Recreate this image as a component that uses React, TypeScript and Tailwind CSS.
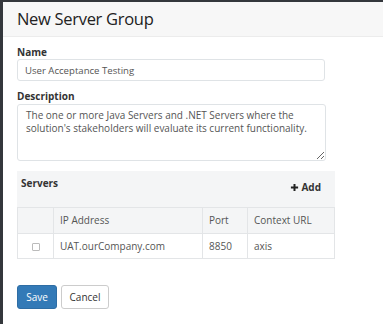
import React from 'react';

export default function App() {
  return (
    <div className="w-[383px] h-[324px] bg-[#34373c] pt-[2px] pl-[3px] overflow-hidden" style={{ fontFamily: '"Open Sans", sans-serif' }}>
      <div className="bg-white h-full">
        <div className="h-[35px] bg-[#f7f7f7] border-b border-[#ececec] pl-[14px] flex items-center">
          <h1 className="text-[16.5px] tracking-[-0.3px] text-[#222] leading-none">New Server Group</h1>
        </div>

        <div className="pl-[14px] pt-[8px]">
          <label className="block text-[10px] font-bold text-[#333] leading-[14px]">Name</label>
          <input
            readOnly
            value="User Acceptance Testing"
            className="block w-[308px] h-[22px] border border-[#dfe3e6] rounded-[3px] px-[7px] text-[9.6px] text-[#555] outline-none"
          />

          <label className="block mt-[8px] text-[10px] font-bold text-[#333] leading-[14px]">Description</label>
          <textarea
            readOnly
            value={"The one or more Java Servers and .NET Servers where the solution's stakeholders will evaluate its current functionality."}
            className="mt-[1px] block w-[309px] h-[57px] border border-[#dfe3e6] rounded-[3px] px-[8px] py-[4px] text-[10px] leading-[13px] text-[#555] outline-none resize-y"
          />

          <div className="mt-[10px] w-[318px] bg-[#f4f5f6]">
            <div className="h-[36px] flex items-start justify-between pl-[4px] pr-[14px]">
              <span className="mt-[5px] text-[10px] font-bold text-[#333]">Servers</span>
              <span className="mt-[9px] text-[10px] font-bold text-[#333] flex items-center gap-[2px]">
                <svg width="9" height="9" viewBox="0 0 10 10"><path d="M5 1v8M1 5h8" stroke="#222" strokeWidth="2.2" /></svg>
                Add
              </span>
            </div>
            <table className="w-full border-collapse text-[10px] text-[#555]">
              <thead>
                <tr className="h-[26px]">
                  <th className="w-[36px] border border-[#e3e5e7] font-normal"></th>
                  <th className="w-[149px] border border-[#e3e5e7] font-normal text-left pl-[6px]">IP Address</th>
                  <th className="w-[45px] border border-[#e3e5e7] font-normal text-left pl-[6px]">Port</th>
                  <th className="border border-[#e3e5e7] font-normal text-left pl-[6px]">Context URL</th>
                </tr>
              </thead>
              <tbody className="bg-white">
                <tr className="h-[25px]">
                  <td className="border border-[#e3e5e7] text-center">
                    <span className="inline-block w-[8px] h-[8px] border border-[#bbb] rounded-[1px] align-middle"></span>
                  </td>
                  <td className="border border-[#e3e5e7] pl-[6px]">UAT.ourCompany.com</td>
                  <td className="border border-[#e3e5e7] pl-[6px]">8850</td>
                  <td className="border border-[#e3e5e7] pl-[6px]">axis</td>
                </tr>
              </tbody>
            </table>
          </div>

          <div className="mt-[26px] flex gap-[4px]">
            <button className="h-[24px] w-[40px] bg-[#337ab7] border border-[#2e6da4] rounded-[3px] text-white text-[10px]">Save</button>
            <button className="h-[24px] w-[48px] bg-white border border-[#ccc] rounded-[3px] text-[#333] text-[10px]">Cancel</button>
          </div>
        </div>
      </div>
    </div>
  );
}
